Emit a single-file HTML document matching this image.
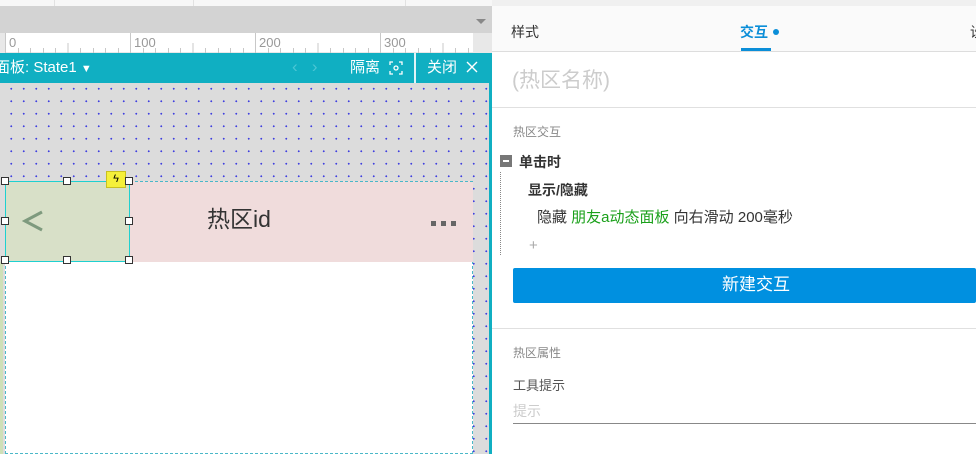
<!DOCTYPE html>
<html><head><meta charset="utf-8"><style>
*{margin:0;padding:0;box-sizing:border-box}
body{width:976px;height:454px;overflow:hidden;position:relative;background:#fff;font-family:"Liberation Sans","Noto Sans CJK SC",sans-serif}
.a{position:absolute}
.t{position:absolute;white-space:nowrap;line-height:1}
</style></head><body>
<div class="a" style="left:0;top:0;width:492px;height:6px;background:#f7f7f7"></div>
<div class="a" style="left:54px;top:0;width:1px;height:6px;background:#e2e2e2"></div>
<div class="a" style="left:193px;top:0;width:1px;height:6px;background:#e2e2e2"></div>
<div class="a" style="left:405px;top:0;width:1px;height:6px;background:#e2e2e2"></div>
<div class="a" style="left:0;top:6px;width:492px;height:27px;background:#d3d3d3"></div>
<div class="a" style="left:476px;top:19px;width:0;height:0;border-left:5px solid transparent;border-right:5px solid transparent;border-top:5px solid #888"></div>
<div class="a" style="left:0;top:33px;width:492px;height:20px;background:#e8e8e8"></div>
<div class="a" style="left:6px;top:33px;width:467px;height:19px;background:#fff"></div>
<svg class="a" style="left:0;top:33px" width="480" height="20">
<g stroke="#c8c8c8" stroke-width="1">
<line x1="5.5" y1="0" x2="5.5" y2="20"/><line x1="130.5" y1="0" x2="130.5" y2="20"/><line x1="255.5" y1="0" x2="255.5" y2="20"/><line x1="380.5" y1="0" x2="380.5" y2="20"/>
<path d="M18.5 15v5M30.5 15v5M43.5 15v5M55.5 15v5M68 10v10M80.5 15v5M93.5 15v5M105.5 15v5M118.5 15v5M143.5 15v5M155.5 15v5M168.5 15v5M180.5 15v5M193 10v10M205.5 15v5M218.5 15v5M230.5 15v5M243.5 15v5M268.5 15v5M280.5 15v5M293.5 15v5M305.5 15v5M318 10v10M330.5 15v5M343.5 15v5M355.5 15v5M368.5 15v5M393.5 15v5M405.5 15v5M418.5 15v5M430.5 15v5M443 10v10M455.5 15v5M468.5 15v5"/>
</g>
<g fill="#999" font-size="13" font-family="Liberation Sans"><text x="9" y="14">0</text><text x="134" y="14">100</text><text x="259" y="14">200</text><text x="384" y="14">300</text></g>
</svg>
<div class="a" style="left:0;top:53px;width:489px;height:30px;background:#10afc2"></div>
<div class="a" style="left:414px;top:53px;width:2px;height:30px;background:#e0f4f7"></div>
<div class="t" style="left:-5px;top:60px;font-size:15px;color:#fff">面板: State1 <span style="font-size:11px">▼</span></div>
<div class="t" style="left:292px;top:58px;font-size:17px;color:#4cc6d4">‹ &nbsp; ›</div>
<div class="t" style="left:350px;top:60px;font-size:15px;color:#fff">隔离</div>
<svg class="a" style="left:389px;top:61px" width="14" height="14"><g fill="none" stroke="#fff" stroke-width="1.3"><path d="M1 4V1h3M10 1h3v3M13 10v3h-3M4 13H1v-3"/><circle cx="7" cy="7" r="2"/></g></svg>
<div class="t" style="left:427px;top:60px;font-size:15px;color:#fff">关闭</div>
<svg class="a" style="left:466px;top:61px" width="12" height="12"><path d="M1 1l10 10M11 1L1 11" stroke="#fff" stroke-width="1.4"/></svg>
<div class="a" style="left:0;top:83px;width:489px;height:371px;background:#dcdcdc;background-image:radial-gradient(circle,#4040e0 0.9px,transparent 1.1px);background-size:12.5px 12.5px;background-position:5px 87px"></div>
<div class="a" style="left:5px;top:181px;width:468px;height:273px;background:#fff;border:1px dashed #4ab8c8;border-top:none"></div>
<div class="a" style="left:130px;top:181px;width:343px;height:81px;background:#f0dcdc;border-top:1px dashed #4ab8c8"></div>
<div class="a" style="left:5px;top:181px;width:125px;height:81px;background:#d8e0c8;border:1px solid #1fd0d0"></div>
<div class="a" style="left:0;top:262px;width:3px;height:192px;background:#cfe0b8"></div>
<svg class="a" style="left:22px;top:209px" width="22" height="24"><path d="M20 3L3 12l17 9" fill="none" stroke="#7e9a7e" stroke-width="3"/></svg>
<div class="t" style="left:207px;top:208px;font-size:23px;color:#333">热区id</div>
<div class="a" style="left:431px;top:221px;width:5px;height:5px;background:#666"></div>
<div class="a" style="left:441px;top:221px;width:5px;height:5px;background:#666"></div>
<div class="a" style="left:451px;top:221px;width:5px;height:5px;background:#666"></div>
<div class="a" style="left:106px;top:171px;width:20px;height:17px;background:#f5f03a;border:1px solid #c8c020;font-size:11px;text-align:center;line-height:15px">ϟ</div>
<div class="a" style="left:1px;top:177px;width:8px;height:8px;background:#fff;border:1px solid #333"></div>
<div class="a" style="left:63px;top:177px;width:8px;height:8px;background:#fff;border:1px solid #333"></div>
<div class="a" style="left:125px;top:177px;width:8px;height:8px;background:#fff;border:1px solid #333"></div>
<div class="a" style="left:1px;top:217px;width:8px;height:8px;background:#fff;border:1px solid #333"></div>
<div class="a" style="left:125px;top:217px;width:8px;height:8px;background:#fff;border:1px solid #333"></div>
<div class="a" style="left:1px;top:256px;width:8px;height:8px;background:#fff;border:1px solid #333"></div>
<div class="a" style="left:63px;top:256px;width:8px;height:8px;background:#fff;border:1px solid #333"></div>
<div class="a" style="left:125px;top:256px;width:8px;height:8px;background:#fff;border:1px solid #333"></div>
<div class="a" style="left:489px;top:53px;width:3px;height:401px;background:#10afc2"></div>
<div class="a" style="left:492px;top:0;width:484px;height:6px;background:#f0f0f0"></div>
<div class="a" style="left:492px;top:6px;width:484px;height:46px;background:#fafafa;border-bottom:1px solid #ddd"></div>
<div class="t" style="left:511px;top:25px;font-size:14px;color:#333">样式</div>
<div class="t" style="left:740px;top:25px;font-size:14px;color:#0b8ed8;font-weight:bold">交互</div>
<div class="a" style="left:773px;top:29px;width:6px;height:6px;border-radius:50%;background:#0b8ed8"></div>
<div class="a" style="left:741px;top:48px;width:30px;height:3px;background:#0b8ed8"></div>
<div class="t" style="left:970px;top:25px;font-size:14px;color:#333">设</div>
<div class="t" style="left:512px;top:70px;font-size:21px;color:#ccc">(热区名称)</div>
<div class="a" style="left:492px;top:107px;width:484px;height:1px;background:#e0e0e0"></div>
<div class="t" style="left:513px;top:126px;font-size:12px;color:#888">热区交互</div>
<div class="a" style="left:500px;top:155px;width:12px;height:12px;background:#777"></div>
<div class="a" style="left:503px;top:160px;width:6px;height:2px;background:#fff"></div>
<div class="t" style="left:519px;top:155px;font-size:14px;color:#333;font-weight:bold">单击时</div>
<div class="a" style="left:500px;top:172px;width:0;height:83px;border-left:1px dotted #888"></div>
<div class="t" style="left:528px;top:183px;font-size:14px;color:#333;font-weight:bold">显示/隐藏</div>
<div class="t" style="left:537px;top:210px;font-size:15px;color:#333">隐藏 <span style="color:#1aa01a">朋友a动态面板</span> 向右滑动 200毫秒</div>
<div class="t" style="left:529px;top:238px;font-size:15px;color:#aaa">+</div>
<div class="a" style="left:513px;top:268px;width:463px;height:35px;background:#0090e0;border-radius:2px"></div>
<div class="t" style="left:722px;top:276px;font-size:17px;color:#fff">新建交互</div>
<div class="a" style="left:492px;top:328px;width:484px;height:1px;background:#e0e0e0"></div>
<div class="t" style="left:513px;top:347px;font-size:12px;color:#888">热区属性</div>
<div class="t" style="left:513px;top:379px;font-size:13px;color:#555">工具提示</div>
<div class="t" style="left:513px;top:404px;font-size:14px;color:#ccc">提示</div>
<div class="a" style="left:513px;top:423px;width:463px;height:1px;background:#888"></div>
</body></html>
